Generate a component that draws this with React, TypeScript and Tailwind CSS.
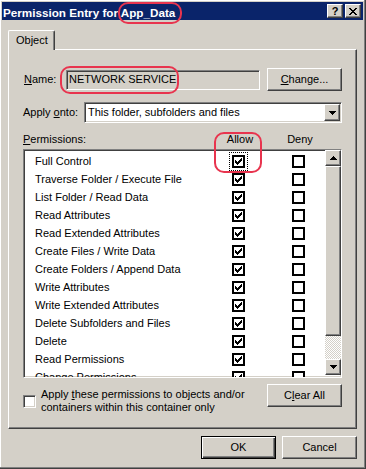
import React from "react";

const raised =
  "border border-t-white border-l-white border-r-[#404040] border-b-[#404040] shadow-[inset_-1px_-1px_0_#808080,inset_1px_1px_0_#d4d0c8] bg-[#d4d0c8]";
const sunken =
  "border border-t-[#808080] border-l-[#808080] border-r-white border-b-white shadow-[inset_1px_1px_0_#404040,inset_-1px_-1px_0_#d4d0c8]";

function Check() {
  return (
    <svg width="9" height="9" viewBox="0 0 9 9" shapeRendering="crispEdges">
      <path
        fill="#000"
        d="M7 1h1v3h-1z M6 2h1v3h-1z M5 3h1v3h-1z M4 4h1v3h-1z M3 5h1v3h-1z M2 4h1v3h-1z M1 3h1v3h-1z"
      />
    </svg>
  );
}

function Arrow({ up }: { up?: boolean }) {
  return (
    <svg width="7" height="4" viewBox="0 0 7 4" shapeRendering="crispEdges">
      {up ? (
        <path fill="#000" d="M3 0h1v1h1v1h1v1h1v1h-7v-1h1v-1h1v-1h1z" />
      ) : (
        <path fill="#000" d="M0 0h7v1h-1v1h-1v1h-1v1h-1v-1h-1v-1h-1v-1h-1z" />
      )}
    </svg>
  );
}

function ListBox({ checked }: { checked?: boolean }) {
  return (
    <div className="flex h-[13px] w-[13px] items-center justify-center border-2 border-black bg-white">
      {checked ? <Check /> : null}
    </div>
  );
}

const perms = [
  "Full Control",
  "Traverse Folder / Execute File",
  "List Folder / Read Data",
  "Read Attributes",
  "Read Extended Attributes",
  "Create Files / Write Data",
  "Create Folders / Append Data",
  "Write Attributes",
  "Write Extended Attributes",
  "Delete Subfolders and Files",
  "Delete",
  "Read Permissions",
  "Change Permissions",
];

export default function App() {
  return (
    <div className="relative h-[469px] w-[366px] overflow-hidden bg-[#d4d0c8] font-['Liberation_Sans',Arial,sans-serif] text-[11px] leading-[13px] text-black">
      <div className="flex h-full flex-col border-b border-r border-[#404040] pb-[2px] pl-[2px] pr-[2px] pt-[2px] shadow-[inset_-1px_-1px_0_#808080,inset_1px_1px_0_#ffffff]">
        {/* Title bar */}
        <div className="flex h-[18px] items-center justify-between bg-[#0a246a] pl-[1px] pr-[2px]">
          <span className="pt-[2px] text-[11.7px] font-bold text-white">
            Permission Entry for App_Data
          </span>
          <div className="flex gap-[2px]">
            <div className={`flex h-[14px] w-[16px] items-center justify-center ${raised}`}>
              <span className="text-[11px] font-bold leading-none">?</span>
            </div>
            <div className={`flex h-[14px] w-[16px] items-center justify-center ${raised}`}>
              <svg width="8" height="7" viewBox="0 0 8 7" shapeRendering="crispEdges">
                <path
                  fill="#000"
                  d="M0 0h2v1h-2z M6 0h2v1h-2z M1 1h2v1h-2z M5 1h2v1h-2z M2 2h4v1h-4z M3 3h2v1h-2z M2 4h4v1h-4z M1 5h2v1h-2z M5 5h2v1h-2z M0 6h2v1h-2z M6 6h2v1h-2z"
                />
              </svg>
            </div>
          </div>
        </div>

        {/* Tabs */}
        <div className="ml-[6px] mt-[10px] flex w-[349px] flex-col">
          <div className="relative z-10 -mb-[1px] flex h-[20px] w-[47px] items-center rounded-t-[2px] border-l border-r border-t border-l-white border-r-[#404040] border-t-white bg-[#d4d0c8] pl-[7px] shadow-[inset_-1px_0_0_#808080]">
            Object
          </div>
          <div className="flex h-[380px] flex-col border border-b-[#404040] border-l-white border-r-[#404040] border-t-white pl-[14px] pr-[14px] pt-[18px] shadow-[inset_-1px_-1px_0_#808080]">
            {/* Name row */}
            <div className="flex h-[23px] items-center">
              <span className="w-[43px] pl-[1px]">
                <span className="underline">N</span>ame:
              </span>
              <div className={`flex h-[20px] w-[194px] items-center bg-[#d4d0c8] pl-[2px] ${sunken}`}>
                NETWORK SERVICE
              </div>
              <div className={`ml-auto flex h-[23px] w-[75px] items-center justify-center ${raised}`}>
                <span>
                  <span className="underline">C</span>hange...
                </span>
              </div>
            </div>

            {/* Apply onto */}
            <div className="mt-[11px] flex h-[21px] items-center">
              <span className="w-[61px]">
                Apply <span className="underline">o</span>nto:
              </span>
              <div className={`flex h-[21px] flex-1 items-center bg-white ${sunken}`}>
                <span className="flex-1 pl-[3px]">This folder, subfolders and files</span>
                <div className={`mr-[1px] flex h-[17px] w-[16px] items-center justify-center ${raised}`}>
                  <Arrow />
                </div>
              </div>
            </div>

            {/* Header */}
            <div className="mt-[10px] flex h-[13px] items-center">
              <span className="w-[192px]">
                <span className="underline">P</span>ermissions:
              </span>
              <span className="w-[50px] text-center">Allow</span>
              <span className="w-[10px]" />
              <span className="w-[50px] text-center">Deny</span>
            </div>

            {/* List */}
            <div className={`mt-[3px] flex h-[229px] bg-white ${sunken}`}>
              <div className="flex-1 overflow-hidden pt-[2px]">
                {perms.map((p, i) => (
                  <div key={p} className="flex h-[18px] items-center">
                    <span className="w-[208px] whitespace-nowrap pl-[11px]">{p}</span>
                    <div className={i === 0 ? "outline-1 outline-offset-2 outline-dotted outline-black" : ""}>
                      <ListBox checked />
                    </div>
                    <div className="ml-[47px]">
                      <ListBox />
                    </div>
                  </div>
                ))}
              </div>
              <div className="flex w-[16px] flex-col">
                <div className={`flex h-[16px] items-center justify-center ${raised}`}>
                  <Arrow up />
                </div>
                <div className={`h-[170px] ${raised}`} />
                <div className="h-[23px] bg-[image:repeating-conic-gradient(#d4d0c8_0_25%,#ffffff_0_50%)] bg-[length:2px_2px]" />
                <div className={`flex h-[16px] items-center justify-center ${raised}`}>
                  <Arrow />
                </div>
              </div>
            </div>

            {/* Bottom row */}
            <div className="mt-[6px] flex items-start justify-between">
              <div className="mt-[4px] flex items-center gap-[5px]">
                <div className={`h-[13px] w-[13px] bg-white ${sunken}`} />
                <div className="leading-[13px]">
                  <div>
                    Apply <span className="underline">t</span>hese permissions to objects and/or
                  </div>
                  <div>containers within this container only</div>
                </div>
              </div>
              <div className={`flex h-[23px] w-[75px] items-center justify-center ${raised}`}>
                <span>
                  C<span className="underline">l</span>ear All
                </span>
              </div>
            </div>
          </div>

          {/* OK / Cancel */}
          <div className="mt-[7px] flex justify-end gap-[6px]">
            <div className="flex h-[23px] w-[75px] items-center justify-center border border-black bg-[#d4d0c8] shadow-[inset_1px_1px_0_#ffffff,inset_-1px_-1px_0_#404040,inset_-2px_-2px_0_#808080]">
              OK
            </div>
            <div className={`flex h-[23px] w-[75px] items-center justify-center ${raised}`}>Cancel</div>
          </div>
        </div>
      </div>

      {/* Red annotation marks */}
      <div className="pointer-events-none absolute left-[118px] top-[2px] h-[22px] w-[64px] rounded-[10px] border-2 border-[#e8344e]" />
      <div className="pointer-events-none absolute left-[60px] top-[66px] h-[28px] w-[119px] rounded-[10px] border-2 border-[#e8344e]" />
      <div className="pointer-events-none absolute left-[214px] top-[132px] h-[41px] w-[48px] rounded-[10px] border-2 border-[#e8344e]" />
    </div>
  );
}
